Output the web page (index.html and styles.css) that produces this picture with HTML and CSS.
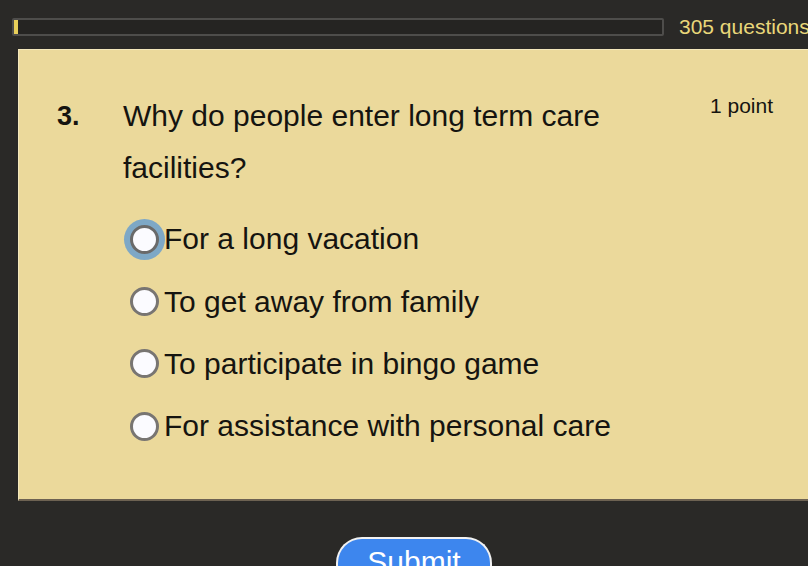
FILE: index.html
```html
<!DOCTYPE html>
<html>
<head>
<meta charset="utf-8">
<link rel="stylesheet" href="styles.css">
</head>
<body>
<div class="top">
  <div class="progress"><div class="fill"></div></div>
  <div class="count">305 questions</div>
</div>
<div class="card">
  <div class="qrow">
    <div class="num">3.</div>
    <div class="qtext">Why do people enter long term care facilities?</div>
    <div class="points">1 point</div>
  </div>
  <div class="options">
    <label class="opt"><span class="radio focused"></span><span>For a long vacation</span></label>
    <label class="opt"><span class="radio"></span><span>To get away from family</span></label>
    <label class="opt"><span class="radio"></span><span>To participate in bingo game</span></label>
    <label class="opt"><span class="radio"></span><span>For assistance with personal care</span></label>
  </div>
</div>
<div class="actions">
  <button class="submit">Submit</button>
</div>
</body>
</html>
```
FILE: styles.css
```css
html, body {
  margin: 0;
  padding: 0;
  background: #2a2927;
  font-family: "Liberation Sans", Arial, sans-serif;
  overflow: hidden;
  height: 566px;
}
.top {
  display: flex;
  align-items: center;
  padding: 18px 0 0 12px;
  height: 18px;
  white-space: nowrap;
}
.progress {
  width: 648px;
  height: 14px;
  border: 2px solid #4e4d4b;
  border-radius: 2px;
  background: #252422;
  flex-shrink: 0;
}
.fill {
  width: 4px;
  height: 14px;
  background: #e8cf5a;
}
.count {
  margin-left: 15px;
  color: #e9d77a;
  font-size: 21px;
}
.card {
  margin: 13px 0 0 18px;
  width: 820px;
  box-sizing: border-box;
  height: 452px;
  background: #ebd99b;
  border-top: 1px solid #f4e8bd;
  border-left: 1px solid #f4e8bd;
  border-bottom: 2px solid #6d6252;
  padding: 40px 0 0 38px;
}
.qrow {
  display: flex;
  align-items: flex-start;
}
.num {
  width: 66px;
  font-weight: bold;
  font-size: 27px;
  line-height: 52px;
  color: #151410;
}
.qtext {
  width: 540px;
  font-size: 30px;
  line-height: 52px;
  color: #151410;
}
.points {
  margin-left: 47px;
  margin-top: 4px;
  font-size: 21px;
  line-height: 24px;
  color: #151410;
}
.options {
  margin-top: 14px;
  padding-left: 73px;
  display: flex;
  flex-direction: column;
}
.opt {
  display: flex;
  align-items: center;
  height: 62.4px;
  font-size: 30px;
  color: #151410;
}
.radio {
  width: 23px;
  height: 23px;
  border: 3px solid #787572;
  border-radius: 50%;
  background: #fbfbff;
  margin-right: 5px;
  flex-shrink: 0;
}
.radio.focused {
  box-shadow: 0 0 0 6px #7ea8c6;
  border-color: #6a6a6a;
}
.actions {
  display: flex;
  padding-left: 336px;
  margin-top: 36px;
}
.submit {
  width: 156px;
  height: 50px;
  background: #3d86ee;
  color: #ffffff;
  border: 2px solid #f2f2f2;
  border-bottom: none;
  border-radius: 26px 26px 0 0;
  font-family: "Liberation Sans", Arial, sans-serif;
  font-size: 30px;
  padding: 6px 0 0 0;
  display: flex;
  justify-content: center;
  align-items: flex-start;
}
```
